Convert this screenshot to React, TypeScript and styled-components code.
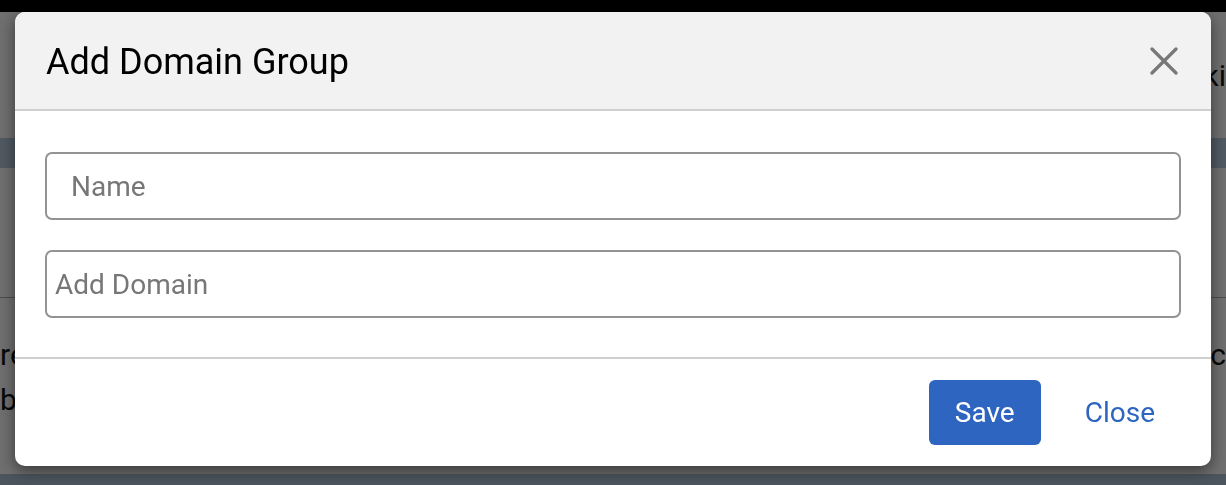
import React from 'react';
import styled, { createGlobalStyle } from 'styled-components';

const GlobalStyle = createGlobalStyle`
  html, body {
    margin: 0;
    padding: 0;
    width: 100%;
    height: 100%;
    overflow: hidden;
  }
  body {
    font-family: Roboto, "Liberation Sans", sans-serif;
    background: #dedede;
  }
`;

// page that sits behind the modal
const Page = styled.div`
  width: 1226px;
  height: 485px;
  display: flex;
  flex-direction: column;
  background: #dedede;
  & > * {
    flex-shrink: 0;
  }
`;

const TopBar = styled.div`
  height: 12px;
  background: #000;
`;

const PageHeader = styled.div`
  height: 126px;
  display: flex;
  align-items: center;
  justify-content: flex-end;
  font-size: 30px;
  color: #111;
`;

const Band = styled.div<{ $color: string; $height: number }>`
  height: ${p => p.$height}px;
  background: ${p => p.$color};
`;

const Spacer = styled.div`
  height: 129px;
  border-bottom: 1px solid #999;
`;

const Rows = styled.div`
  padding-top: 34px;
`;

const TextRow = styled.div`
  display: flex;
  justify-content: space-between;
  height: 45px;
  align-items: center;
  font-size: 30px;
  color: #111;
`;

const Backdrop = styled.div`
  position: fixed;
  inset: 0;
  background: rgba(0, 0, 0, 0.5);
  display: flex;
  justify-content: center;
  align-items: flex-start;
  padding-top: 12px;
`;

const Dialog = styled.div`
  width: 1196px;
  background: #fff;
  border-radius: 10px;
  overflow: hidden;
  box-shadow: 0 5px 15px rgba(0, 0, 0, 0.5);
`;

const Header = styled.div`
  height: 97px;
  background: #f2f2f2;
  border-bottom: 2px solid #cfcfcf;
  display: flex;
  align-items: center;
  justify-content: space-between;
  padding: 0 31px 0 31px;
`;

const Title = styled.h1`
  margin: 0;
  font-size: 36px;
  font-weight: 400;
  color: #000;
  transform: translateY(1px);
`;

const CloseIcon = styled.button`
  border: 0;
  background: none;
  padding: 2px;
  display: flex;
  cursor: pointer;
`;

const Body = styled.div`
  padding: 41px 30px 39px;
  display: flex;
  flex-direction: column;
  gap: 30px;
  border-bottom: 2px solid #cfcfcf;
`;

const Field = styled.input<{ $indent: number }>`
  box-sizing: border-box;
  height: 68px;
  width: 100%;
  border: 2px solid #939393;
  border-radius: 7px;
  padding: 0 ${p => p.$indent}px;
  font-family: Roboto, "Liberation Sans", sans-serif;
  font-size: 28px;
  color: #333;
  outline: none;
  &::placeholder {
    color: #777;
  }
`;

const Footer = styled.div`
  height: 107px;
  display: flex;
  align-items: center;
  justify-content: flex-end;
  padding-right: 34px;
  gap: 22px;
`;

const Button = styled.button<{ $primary?: boolean }>`
  height: 65px;
  border: 0;
  border-radius: 6px;
  font-family: Roboto, "Liberation Sans", sans-serif;
  font-size: 28px;
  padding: 0 ${p => (p.$primary ? 26 : 22)}px;
  background: ${p => (p.$primary ? '#2e65c0' : 'transparent')};
  color: ${p => (p.$primary ? '#fff' : '#2e65c0')};
  cursor: pointer;
`;

const App: React.FC = () => {
  return (
    <>
      <GlobalStyle />
      <Page>
        <TopBar />
        <PageHeader>ki</PageHeader>
        <Band $color="#a1b3c4" $height={30} />
        <Spacer />
        <Rows>
          <TextRow>
            <span>re</span>
            <span>ic</span>
          </TextRow>
          <TextRow>
            <span>b</span>
          </TextRow>
        </Rows>
        <Band $color="#dedede" $height={52} />
        <Band $color="#98aabb" $height={11} />
      </Page>
      <Backdrop>
        <Dialog>
          <Header>
            <Title>Add Domain Group</Title>
            <CloseIcon aria-label="close">
              <svg width="28" height="28" viewBox="0 0 28 28">
                <path d="M2 2 L26 26 M26 2 L2 26" stroke="#777" strokeWidth="3.2" strokeLinecap="round" />
              </svg>
            </CloseIcon>
          </Header>
          <Body>
            <Field $indent={24} placeholder="Name" />
            <Field $indent={8} placeholder="Add Domain" />
          </Body>
          <Footer>
            <Button $primary>Save</Button>
            <Button>Close</Button>
          </Footer>
        </Dialog>
      </Backdrop>
    </>
  );
};

export default App;
